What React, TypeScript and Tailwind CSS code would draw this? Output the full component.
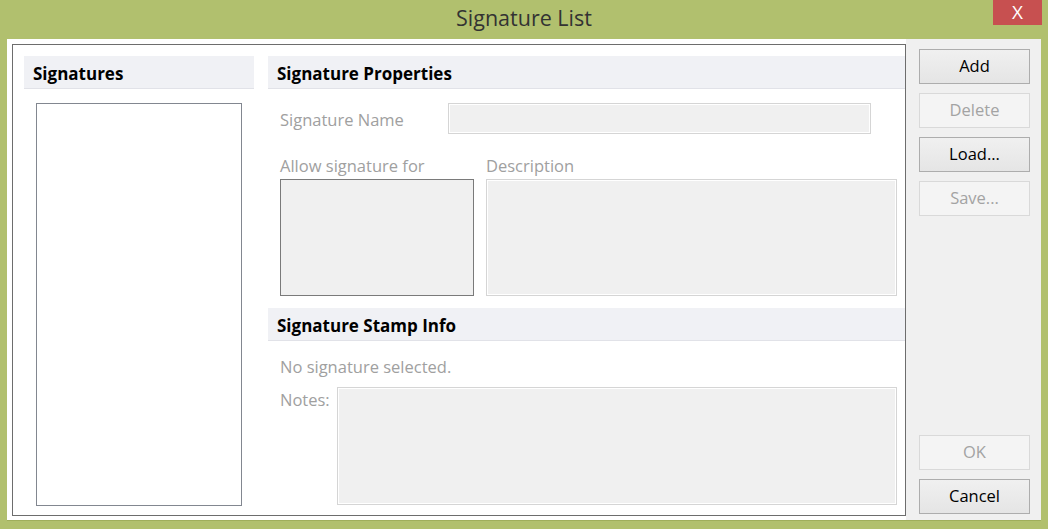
import React from 'react';

const FONT = { fontFamily: '"Open Sans", "Noto Sans", "Liberation Sans", sans-serif' };

type SectionHeaderProps = { title: string; className?: string };

const SectionHeader: React.FC<SectionHeaderProps> = ({ title, className = '' }) => (
  <div
    className={`flex items-center pl-[9px] pt-[3px] bg-[#f0f1f5] border-b border-[#e1e2e8] text-[17px] font-bold text-black ${className}`}
  >
    {title}
  </div>
);

type DialogButtonProps = { label: string; disabled?: boolean; className?: string };

const DialogButton: React.FC<DialogButtonProps> = ({ label, disabled, className = '' }) => (
  <button
    type="button"
    disabled={disabled}
    className={`flex w-[111px] h-[35px] items-center justify-center text-[16.5px] border ${
      disabled
        ? 'border-[#d9d9d9] bg-[#f4f4f4] text-[#a3a3a3]'
        : 'border-[#adadad] bg-gradient-to-b from-[#f0f0f0] to-[#e5e5e5] text-black'
    } ${className}`}
  >
    {label}
  </button>
);

// disabled text field: light frame with a white inner line
const FieldBox: React.FC<{ className?: string; dark?: boolean }> = ({ className = '', dark }) => (
  <div
    className={`bg-[#f0f0f0] border ${
      dark ? 'border-[#7a7a7a]' : 'border-[#d5d5d5] shadow-[inset_0_0_0_1px_#ffffff]'
    } ${className}`}
  />
);

const App: React.FC = () => {
  return (
    <div className="flex flex-col w-[1048px] h-[529px] bg-[#b1c06e] overflow-hidden" style={FONT}>
      {/* title bar */}
      <div className="relative flex h-[39px] shrink-0 items-center justify-center">
        <span className="text-[21.5px] text-[#333333] -mt-[3px]">Signature List</span>
        <button
          type="button"
          className="absolute top-0 right-[6px] flex w-[49px] h-[25px] items-center justify-center bg-[#c75050] text-white text-[19px]"
        >
          X
        </button>
      </div>

      <div className="flex flex-1 mx-[7px] mb-[8px] border-b border-[#9fae5c]">
        {/* main area */}
        <div className="flex flex-col w-[899px] bg-white pl-[5px] pt-[5px] pb-[4px]">
          <div className="flex flex-1 border border-[#6d6d6d] pl-[11px] pt-[11px]">
            {/* signatures column */}
            <div className="flex flex-col w-[230px]">
              <SectionHeader title="Signatures" className="h-[33px]" />
              <div className="ml-[12px] mt-[14px] w-[206px] h-[403px] border border-[#828790] bg-white" />
            </div>

            {/* properties column */}
            <div className="flex flex-col flex-1 ml-[14px]">
              <SectionHeader title="Signature Properties" className="h-[33px]" />
              <div className="flex items-center mt-[14px] pl-[12px] h-[31px]">
                <span className="w-[168px] pt-[3px] text-[16.5px] text-[#a0a0a0]">Signature Name</span>
                <FieldBox className="w-[423px] h-[31px]" />
              </div>
              <div className="flex mt-[21px] pl-[12px] gap-[12px]">
                <div className="flex flex-col">
                  <span className="text-[16.5px] text-[#a0a0a0] leading-[22px]">Allow signature for</span>
                  <FieldBox dark className="mt-[2px] w-[194px] h-[117px]" />
                </div>
                <div className="flex flex-col">
                  <span className="text-[16.5px] text-[#a0a0a0] leading-[22px]">Description</span>
                  <FieldBox className="mt-[2px] w-[411px] h-[117px]" />
                </div>
              </div>
              <SectionHeader title="Signature Stamp Info" className="mt-[12px] h-[33px]" />
              <span className="mt-[15px] pl-[12px] text-[16.5px] text-[#a0a0a0] leading-[22px]">
                No signature selected.
              </span>
              <div className="flex mt-[9px] pl-[12px]">
                <span className="w-[57px] text-[16.5px] text-[#a0a0a0] leading-[22px] mt-[2px]">Notes:</span>
                <FieldBox className="w-[560px] h-[118px]" />
              </div>
            </div>
          </div>
        </div>

        {/* button column */}
        <div className="flex flex-col flex-1 bg-[#f0f0f0] pl-[13px] pt-[10px] pb-[6px]">
          <div className="flex flex-col gap-[9px]">
            <DialogButton label="Add" />
            <DialogButton label="Delete" disabled />
            <DialogButton label="Load..." />
            <DialogButton label="Save..." disabled />
          </div>
          <div className="flex flex-col gap-[9px] mt-auto">
            <DialogButton label="OK" disabled />
            <DialogButton label="Cancel" />
          </div>
        </div>
      </div>
    </div>
  );
};

export default App;
